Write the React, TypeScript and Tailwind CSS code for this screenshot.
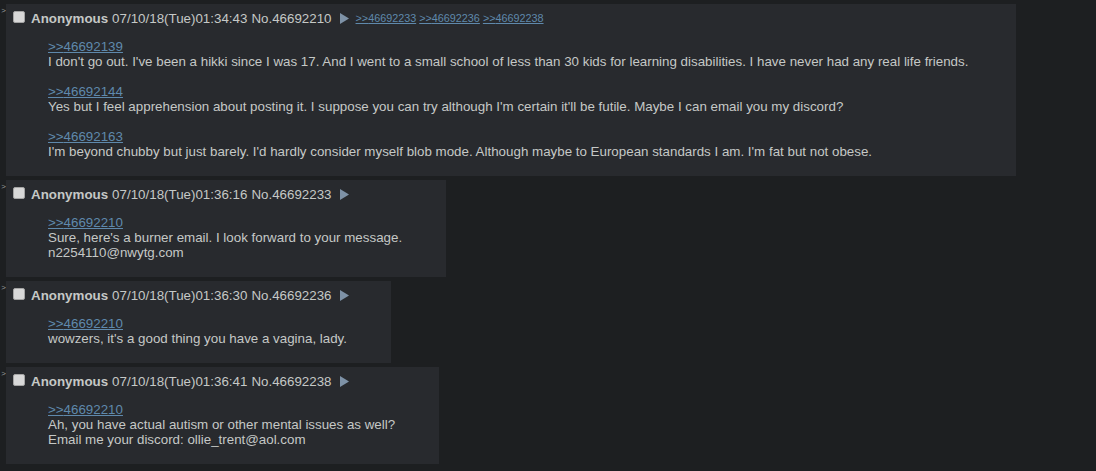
import React from "react";

type Post = {
  date: string;
  no: string;
  backlinks?: string[];
  wide?: boolean;
  body: React.ReactNode;
};

const Q = ({ to }: { to: string }) => (
  <a className="text-[#5f89ac] underline underline-offset-[1px]" href="#">
    &gt;&gt;{to}
  </a>
);

const posts: Post[] = [
  {
    date: "07/10/18(Tue)01:34:43",
    no: "46692210",
    backlinks: ["46692233", "46692236", "46692238"],
    wide: true,
    body: (
      <>
        <Q to="46692139" />
        <br />
        I don't go out. I've been a hikki since I was 17. And I went to a small school of less than 30 kids for learning disabilities. I have never had any real life friends.
        <br />
        <br />
        <Q to="46692144" />
        <br />
        Yes but I feel apprehension about posting it. I suppose you can try although I'm certain it'll be futile. Maybe I can email you my discord?
        <br />
        <br />
        <Q to="46692163" />
        <br />
        I'm beyond chubby but just barely. I'd hardly consider myself blob mode. Although maybe to European standards I am. I'm fat but not obese.
      </>
    ),
  },
  {
    date: "07/10/18(Tue)01:36:16",
    no: "46692233",
    body: (
      <>
        <Q to="46692210" />
        <br />
        Sure, here's a burner email. I look forward to your message.
        <br />
        n2254110@nwytg.com
      </>
    ),
  },
  {
    date: "07/10/18(Tue)01:36:30",
    no: "46692236",
    body: (
      <>
        <Q to="46692210" />
        <br />
        wowzers, it's a good thing you have a vagina, lady.
      </>
    ),
  },
  {
    date: "07/10/18(Tue)01:36:41",
    no: "46692238",
    body: (
      <>
        <Q to="46692210" />
        <br />
        Ah, you have actual autism or other mental issues as well?
        <br />
        Email me your discord: ollie_trent@aol.com
      </>
    ),
  },
];

function Reply({ p }: { p: Post }) {
  return (
    <div className="flex items-start">
      <div className="w-[6px] h-[20px] overflow-hidden relative shrink-0">
        <span className="absolute right-0 top-[3px] text-[8px] leading-[8px] text-[#9a9c9a]">&gt;</span>
      </div>
      <div className={p.wide ? "bg-[#282a2e] p-[2px] w-[1010px]" : "bg-[#282a2e] p-[2px] w-fit"}>
        <div className="h-[20px] flex items-start whitespace-nowrap leading-[15px]">
          <span className="mt-[5px] ml-[5px] mr-[6px] w-[12px] h-[12px] bg-[#d8d8d8] border border-[#a4a4a4] rounded-[2px] shrink-0" />
          <div className="pt-[5px] flex items-start">
            <span className="font-bold text-[#c5c8c6]">Anonymous</span>
            <span className="ml-[4px]">{p.date}</span>
            <span className="ml-[4px]">No.{p.no}</span>
            <svg className="ml-[8px] mt-[2px]" width="9" height="11" viewBox="0 0 9 11">
              <polygon points="0,0 9,5.5 0,11" fill="#7e92a7" />
            </svg>
            {p.backlinks && (
              <span className="ml-[7px] text-[10.8px] flex gap-[3px]">
                {p.backlinks.map((b) => (
                  <a key={b} href="#" className="text-[#5f89ac] underline">
                    &gt;&gt;{b}
                  </a>
                ))}
              </span>
            )}
          </div>
        </div>
        <div className="mt-[13px] mb-[15px] ml-[40px] mr-[42px] leading-[15px]">{p.body}</div>
      </div>
    </div>
  );
}

export default function App() {
  return (
    <div
      className="w-[1096px] h-[471px] bg-[#1d1f21] text-[#c5c8c6] text-[13.35px] pt-[4px] flex flex-col gap-[4px] overflow-hidden"
      style={{ fontFamily: '"Liberation Sans", Arial, sans-serif' }}
    >
      {posts.map((p) => (
        <Reply key={p.no} p={p} />
      ))}
    </div>
  );
}
